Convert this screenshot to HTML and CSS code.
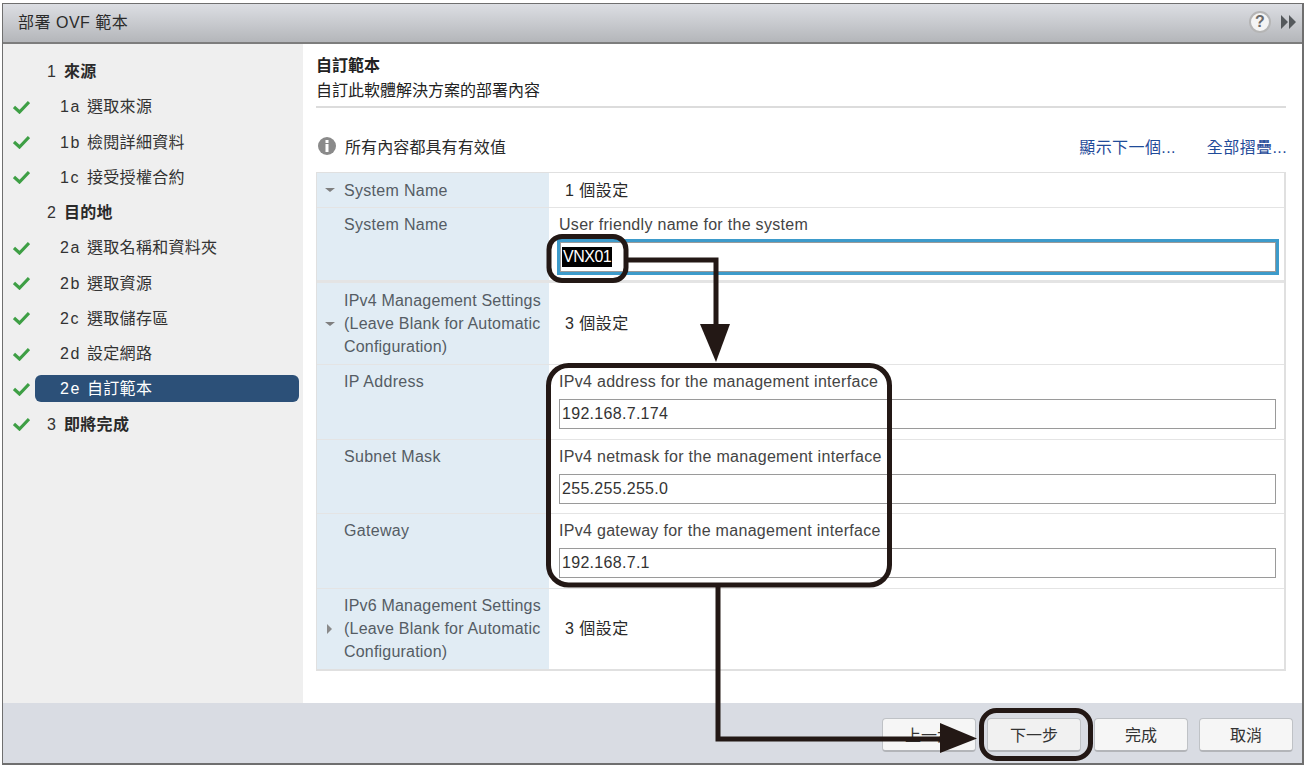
FILE: index.html
```html
<!DOCTYPE html>
<html>
<head>
    <meta charset="UTF-8">
    <title>部署 OVF 範本</title>
    <link rel="stylesheet" href="styles.css">
</head>

<body>
    <div class="dialog">

        <div class="titleBar">
            <div class="titleText">部署 OVF 範本</div>
            <svg class="helpIcon" width="24" height="24" viewBox="0 0 24 24">
                <circle cx="12" cy="12" r="10" fill="#f4f4f4" stroke="#b5b5b5" stroke-width="2"/>
                <text x="12" y="17" text-anchor="middle" class="helpMark">?</text>
            </svg>
            <svg class="moreIcon" width="16" height="14" viewBox="0 0 16 14">
                <path d="M0 0L7 7L0 14Z M8 0L15 7L8 14Z" fill="#55595c"/>
            </svg>
        </div>

        <div class="middle">
            <ul class="sidebar">
                <li class="step top"><span class="noCheck"></span><div class="stepLabel"><span class="num">1</span><b>來源</b></div></li>
                <li class="step sub"><svg class="check" viewBox="0 0 17 14"><path d="M1 7L6.500 12L16 2" fill="none" stroke="#3e9f45" stroke-width="3.200"/></svg><div class="stepLabel"><span class="num">1a</span>選取來源</div></li>
                <li class="step sub"><svg class="check" viewBox="0 0 17 14"><path d="M1 7L6.500 12L16 2" fill="none" stroke="#3e9f45" stroke-width="3.200"/></svg><div class="stepLabel"><span class="num">1b</span>檢閱詳細資料</div></li>
                <li class="step sub"><svg class="check" viewBox="0 0 17 14"><path d="M1 7L6.500 12L16 2" fill="none" stroke="#3e9f45" stroke-width="3.200"/></svg><div class="stepLabel"><span class="num">1c</span>接受授權合約</div></li>
                <li class="step top"><span class="noCheck"></span><div class="stepLabel"><span class="num">2</span><b>目的地</b></div></li>
                <li class="step sub"><svg class="check" viewBox="0 0 17 14"><path d="M1 7L6.500 12L16 2" fill="none" stroke="#3e9f45" stroke-width="3.200"/></svg><div class="stepLabel"><span class="num">2a</span>選取名稱和資料夾</div></li>
                <li class="step sub"><svg class="check" viewBox="0 0 17 14"><path d="M1 7L6.500 12L16 2" fill="none" stroke="#3e9f45" stroke-width="3.200"/></svg><div class="stepLabel"><span class="num">2b</span>選取資源</div></li>
                <li class="step sub"><svg class="check" viewBox="0 0 17 14"><path d="M1 7L6.500 12L16 2" fill="none" stroke="#3e9f45" stroke-width="3.200"/></svg><div class="stepLabel"><span class="num">2c</span>選取儲存區</div></li>
                <li class="step sub"><svg class="check" viewBox="0 0 17 14"><path d="M1 7L6.500 12L16 2" fill="none" stroke="#3e9f45" stroke-width="3.200"/></svg><div class="stepLabel"><span class="num">2d</span>設定網路</div></li>
                <li class="step sub current"><svg class="check" viewBox="0 0 17 14"><path d="M1 7L6.500 12L16 2" fill="none" stroke="#3e9f45" stroke-width="3.200"/></svg><div class="stepLabel"><span class="num">2e</span>自訂範本</div></li>
                <li class="step top"><svg class="check" viewBox="0 0 17 14"><path d="M1 7L6.500 12L16 2" fill="none" stroke="#3e9f45" stroke-width="3.200"/></svg><div class="stepLabel"><span class="num">3</span><b>即將完成</b></div></li>
            </ul>

            <div class="content">
                <div class="pageHead">
                    <div class="pageTitle">自訂範本</div>
                    <div class="pageDesc">自訂此軟體解決方案的部署內容</div>
                </div>

                <div class="statusLine">
                    <svg class="infoIcon" width="18" height="18" viewBox="0 0 18 18">
                        <circle cx="9" cy="9" r="9" fill="#8a8a8a"/>
                        <rect x="7.500" y="3" width="3" height="3" fill="#fff"/>
                        <rect x="7.500" y="7" width="3" height="8" fill="#fff"/>
                    </svg>
                    <span class="statusText">所有內容都具有有效值</span>
                    <a class="link nextLink" href="#">顯示下一個...</a>
                    <a class="link" href="#">全部摺疊...</a>
                </div>

                <div class="propTable">
                    <div class="row rowGroupOne">
                        <div class="label"><span class="arrow down"></span><span>System Name</span></div>
                        <div class="value middleText">1 個設定</div>
                    </div>
                    <div class="row rowName">
                        <div class="label topText"><span class="arrow"></span><span>System Name</span></div>
                        <div class="value">
                            <div class="hint">User friendly name for the system</div>
                            <div class="inputBox focused"><span class="selected">VNX01</span></div>
                        </div>
                    </div>
                    <div class="row rowGroupThree">
                        <div class="label longLabel"><span class="arrow down"></span><span>IPv4 Management Settings (Leave Blank for Automatic Configuration)</span></div>
                        <div class="value middleText">3 個設定</div>
                    </div>
                    <div class="row rowField">
                        <div class="label topText"><span class="arrow"></span><span>IP Address</span></div>
                        <div class="value">
                            <div class="hint">IPv4 address for the management interface</div>
                            <div class="inputBox">192.168.7.174</div>
                        </div>
                    </div>
                    <div class="row rowField">
                        <div class="label topText"><span class="arrow"></span><span>Subnet Mask</span></div>
                        <div class="value">
                            <div class="hint">IPv4 netmask for the management interface</div>
                            <div class="inputBox">255.255.255.0</div>
                        </div>
                    </div>
                    <div class="row rowField">
                        <div class="label topText"><span class="arrow"></span><span>Gateway</span></div>
                        <div class="value">
                            <div class="hint">IPv4 gateway for the management interface</div>
                            <div class="inputBox">192.168.7.1</div>
                        </div>
                    </div>
                    <div class="row rowGroupLast">
                        <div class="label longLabel"><span class="arrow right"></span><span>IPv6 Management Settings (Leave Blank for Automatic Configuration)</span></div>
                        <div class="value middleText">3 個設定</div>
                    </div>
                </div>
            </div>
        </div>

        <div class="footer">
            <button class="btn">上一步</button>
            <button class="btn nextBtn">下一步</button>
            <button class="btn">完成</button>
            <button class="btn">取消</button>
        </div>
    </div>

    <!-- 설명용 표시 (화면 위에 겹침) -->
    <svg class="marks" width="1307" height="768" viewBox="0 0 1307 768">
        <g fill="none" stroke="#231815" stroke-width="5">
            <rect x="549" y="236.500" width="77" height="44" rx="13"/>
            <rect x="548.500" y="365.500" width="341" height="219.500" rx="20"/>
            <rect x="981.500" y="710.500" width="109" height="48" rx="15"/>
            <path d="M626 260H716V328"/>
            <path d="M718 586V739H945"/>
        </g>
        <path d="M700 324H730L716 362Z" fill="#231815"/>
        <path d="M940 723L977 738.500L940 753Z" fill="#231815"/>
    </svg>
</body></html>
```
FILE: styles.css
```css
* {
    margin: 0;
    padding: 0;
    box-sizing: border-box;
    list-style-type: none;
}

html, body {
    background: #fff;
    overflow: hidden;
}

body {
    width: 1307px;
    height: 768px;
    padding: 3px 3px 3px 2px;
    position: relative;
    font-family: "Liberation Sans", "Noto Sans CJK TC", sans-serif;
    font-size: 16px;
    color: #333;
}

.dialog {
    height: 762px;
    border: 1px solid #6f6f6f;
    border-width: 1px 2px 2px 1px;
    display: flex;
    flex-direction: column;
}

/* 제목 */
.titleBar {
    height: 40px;
    flex: none;
    display: flex;
    align-items: center;
    padding: 0 5px 2px 15px;
    background: linear-gradient(#dcdee3, #b4b6ba);
    border-bottom: 2px solid #7d7d7d;
}

.titleText {
    flex: 1;
    color: #2a2a2a;
    font-size: 16px;
    letter-spacing: 0.5px;
    margin-bottom: 2px;
}

.helpIcon {
    margin-right: 9px;
}

.helpMark {
    font-size: 16px;
    font-weight: bold;
    fill: #6a6a6a;
}

/* 가운데 */
.middle {
    flex: 1;
    display: flex;
    min-height: 0;
}

.sidebar {
    width: 300px;
    flex: none;
    background: #efefef;
    padding-top: 10px;
}

.step {
    height: 35.250px;
    display: flex;
    align-items: center;
    padding-left: 10px;
}

.check,
.noCheck {
    display: block;
    width: 17px;
    height: 14px;
    flex: none;
    margin-right: 5px;
}

.stepLabel {
    width: 264px;
    height: 27px;
    line-height: 27px;
    border-radius: 6px;
    white-space: nowrap;
    letter-spacing: 0.3px;
}

.top .stepLabel {
    padding-left: 12px;
}

.sub .stepLabel {
    padding-left: 25px;
}

.num {
    display: inline-block;
    letter-spacing: 1.500px;
}

.top .num {
    width: 17px;
}

.sub .num {
    width: 27px;
}

.stepLabel b {
    color: #2a2a2a;
}

.current .stepLabel {
    background: #2c5078;
    color: #fff;
}

.content {
    flex: 1;
    padding: 10px 15px 0 13px;
}

.pageHead {
    height: 54px;
    margin-right: 1px;
    border-bottom: 2px solid #dcdcdc;
}

.pageTitle,
.pageDesc {
    line-height: 25px;
    color: #222;
}

.pageTitle {
    font-weight: bold;
    line-height: 24px;
}

.statusLine {
    height: 64px;
    padding: 12px 0 0 2px;
    display: flex;
    align-items: center;
}

.infoIcon {
    margin-right: 9px;
}

.statusText {
    flex: 1;
    color: #2a2a2a;
    letter-spacing: 0.1px;
}

.link {
    color: #1f4b99;
    text-decoration: none;
    white-space: nowrap;
    letter-spacing: 0.4px;
}

.nextLink {
    margin-right: 31px;
}

/* 속성 표 */
.propTable {
    border: 1px solid #e0e0e0;
    border-width: 1px 2px 2px 1px;
    width: 970px;
}

.row {
    display: flex;
    border-bottom: 1px solid #e4e4e4;
}

.row:last-child {
    border-bottom: 0;
}

.rowGroupOne {
    height: 35px;
}

.rowName {
    height: 75px;
    border-bottom-width: 3px;
}

.rowGroupThree {
    height: 82px;
}

.rowField {
    height: 74.500px;
}

.rowGroupLast {
    height: 80px;
}

.label {
    width: 232px;
    flex: none;
    background: #e1ecf4;
    color: #555c64;
    display: flex;
    align-items: center;
    line-height: 23px;
    letter-spacing: 0.3px;
}

.longLabel {
    letter-spacing: 0.2px;
}

.topText {
    align-items: flex-start;
    padding-top: 5px;
}

.arrow {
    width: 27px;
    flex: none;
    display: block;
    height: 10px;
}

.arrow.down::before {
    content: "";
    display: block;
    width: 0;
    margin: 3px 0 0 8px;
    border-style: solid;
    border-width: 4px 5px 0 5px;
    border-color: #7f7f7f transparent transparent transparent;
}

.arrow.right::before {
    content: "";
    display: block;
    width: 0;
    margin: 0 0 0 10px;
    border-style: solid;
    border-width: 5px 0 5px 5px;
    border-color: transparent transparent transparent #8a8a8a;
}

.value {
    flex: 1;
    padding: 5px 8px 0 10px;
    color: #2a2a2a;
}

.middleText {
    display: flex;
    align-items: center;
    padding-top: 0;
    padding-bottom: 3px;
    padding-left: 16px;
    letter-spacing: 0.5px;
}

.hint {
    line-height: 23px;
    color: #444;
    letter-spacing: 0.3px;
    white-space: nowrap;
}

.inputBox {
    height: 30px;
    margin-top: 6px;
    border: 1px solid #9a9a9a;
    background: #fff;
    line-height: 28px;
    padding-left: 2px;
    letter-spacing: 0.3px;
    color: #333;
}

.focused {
    height: 36px;
    margin-top: 3px;
    margin-left: -2px;
    margin-right: -3px;
    border: 3px solid #3d9bcb;
    outline: 1px solid #9a9a9a;
    outline-offset: -4px;
    line-height: 30px;
    padding-left: 2px;
}

.selected {
    background: #000;
    color: #fff;
    display: inline-block;
    line-height: 20px;
    padding: 0 1px;
    letter-spacing: -0.5px;
}

/* 아래 버튼 */
.footer {
    height: 60px;
    flex: none;
    background: #d9dce3;
    display: flex;
    justify-content: flex-end;
    align-items: center;
    padding: 3px 9px 0 0;
    gap: 11px;
}

.btn {
    width: 94px;
    height: 34px;
    border: 1px solid #bfc2c6;
    border-bottom: 2px solid #b3b5b9;
    border-radius: 4px;
    background: #f6f6f6;
    font-family: inherit;
    font-size: 16px;
    color: #333;
}

.nextBtn {
    background: #f1f1f1;
    margin-right: 2px;
}

.marks {
    position: absolute;
    left: 0;
    top: 0;
    pointer-events: none;
}
```
